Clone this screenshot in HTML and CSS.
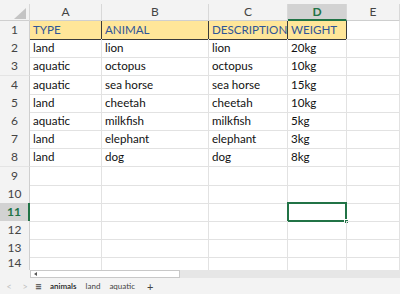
FILE: index.html
```html
<!DOCTYPE html>
<html lang="en">

<head>
    <meta charset="UTF-8">
    <title>animals</title>
    <link rel="stylesheet" href="styles.css">
</head>

<body>
    <div class="sheet">
        <div class="linha cabecalho">
            <div class="canto"><span class="triangulo"></span></div>
            <div class="col">A</div>
            <div class="col">B</div>
            <div class="col">C</div>
            <div class="col ativa">D</div>
            <div class="col">E</div>
        </div>

        <div class="linha titulo">
            <div class="num">1</div>
            <div class="cel">TYPE</div>
            <div class="cel">ANIMAL</div>
            <div class="cel">DESCRIPTION</div>
            <div class="cel">WEIGHT</div>
            <div class="cel vazia"></div>
        </div>
        <div class="linha">
            <div class="num">2</div>
            <div class="cel">land</div><div class="cel">lion</div><div class="cel">lion</div><div class="cel">20kg</div><div class="cel"></div>
        </div>
        <div class="linha">
            <div class="num">3</div>
            <div class="cel">aquatic</div><div class="cel">octopus</div><div class="cel">octopus</div><div class="cel">10kg</div><div class="cel"></div>
        </div>
        <div class="linha">
            <div class="num">4</div>
            <div class="cel">aquatic</div><div class="cel">sea horse</div><div class="cel">sea horse</div><div class="cel">15kg</div><div class="cel"></div>
        </div>
        <div class="linha">
            <div class="num">5</div>
            <div class="cel">land</div><div class="cel">cheetah</div><div class="cel">cheetah</div><div class="cel">10kg</div><div class="cel"></div>
        </div>
        <div class="linha">
            <div class="num">6</div>
            <div class="cel">aquatic</div><div class="cel">milkfish</div><div class="cel">milkfish</div><div class="cel">5kg</div><div class="cel"></div>
        </div>
        <div class="linha">
            <div class="num">7</div>
            <div class="cel">land</div><div class="cel">elephant</div><div class="cel">elephant</div><div class="cel">3kg</div><div class="cel"></div>
        </div>
        <div class="linha">
            <div class="num">8</div>
            <div class="cel">land</div><div class="cel">dog</div><div class="cel">dog</div><div class="cel">8kg</div><div class="cel"></div>
        </div>
        <div class="linha">
            <div class="num">9</div>
            <div class="cel"></div><div class="cel"></div><div class="cel"></div><div class="cel"></div><div class="cel"></div>
        </div>
        <div class="linha">
            <div class="num">10</div>
            <div class="cel"></div><div class="cel"></div><div class="cel"></div><div class="cel"></div><div class="cel"></div>
        </div>
        <div class="linha">
            <div class="num ativo">11</div>
            <div class="cel"></div><div class="cel"></div><div class="cel"></div><div class="cel selecionada"><span class="alca"></span></div><div class="cel"></div>
        </div>
        <div class="linha">
            <div class="num">12</div>
            <div class="cel"></div><div class="cel"></div><div class="cel"></div><div class="cel"></div><div class="cel"></div>
        </div>
        <div class="linha">
            <div class="num">13</div>
            <div class="cel"></div><div class="cel"></div><div class="cel"></div><div class="cel"></div><div class="cel"></div>
        </div>
        <div class="linha ultima">
            <div class="num">14</div>
            <div class="cel"></div><div class="cel"></div><div class="cel"></div><div class="cel"></div><div class="cel"></div>
        </div>
    </div>

    <div class="rolagem">
        <div class="espaco"></div>
        <div class="barra"><span class="seta"></span></div>
    </div>

    <div class="abas">
        <span class="nav">&lt;</span>
        <span class="nav">&gt;</span>
        <span class="menu">&#8801;</span>
        <span class="aba atual">animals</span>
        <span class="aba">land</span>
        <span class="aba">aquatic</span>
        <span class="mais">+</span>
    </div>
</body>

</html>
```

FILE: styles.css
```css
* {
    box-sizing: border-box;
}

body {
    margin: 0;
    width: 400px;
    height: 294px;
    overflow: hidden;
    background: #ffffff;
    font-family: Lato, "Open Sans", sans-serif;
    display: flex;
    flex-direction: column;
}

.sheet {
    height: 270px;
    overflow: hidden;
    flex-shrink: 0;
}

.linha {
    display: grid;
    grid-template-columns: 30px 72px 107px 79px 59px 1fr;
    height: 18.2px;
}

.linha.ultima {
    height: 12.4px;
}

.cabecalho {
    height: 21px;
    padding-top: 4px;
    background: #f3f3f3;
    border-bottom: 1px solid #cfcfcf;
}

.canto {
    position: relative;
    border-right: 1px solid #d8d8d8;
}

.triangulo {
    position: absolute;
    right: 3px;
    bottom: 2px;
    width: 0;
    height: 0;
    border-left: 12px solid transparent;
    border-bottom: 11px solid #c4c4c4;
}

.col {
    text-align: center;
    font-size: 12px;
    line-height: 16px;
    color: #444444;
    border-right: 1px solid #d8d8d8;
}

.col.ativa {
    background: #d2d2d2;
    color: #217346;
    font-weight: bold;
    border-bottom: 2px solid #217346;
    line-height: 15px;
}

.num {
    background: #f3f3f3;
    text-align: center;
    font-size: 12px;
    line-height: 18px;
    color: #444444;
    border-right: 1px solid #cfcfcf;
    border-bottom: 1px solid #e4e4e4;
}

.ultima .num {
    line-height: 12px;
    border-bottom: none;
}

.ultima .cel {
    border-bottom: none;
}

.num.ativo {
    background: #d2d2d2;
    color: #217346;
    font-weight: bold;
    border-right: 2px solid #217346;
}

.cel {
    font-size: 11.6px;
    line-height: 17px;
    padding-left: 3px;
    color: #111111;
    white-space: nowrap;
    border-right: 1px solid #e2e2e2;
    border-bottom: 1px solid #e2e2e2;
    position: relative;
}

.titulo .cel {
    background: #ffe699;
    color: #2f5597;
    border-right: 1px solid #3a3a3a;
    border-bottom: 1px solid #3a3a3a;
}

.titulo .cel.vazia {
    background: #ffffff;
    border-right: 1px solid #e2e2e2;
    border-bottom: 1px solid #e2e2e2;
}

.selecionada {
    border: 2px solid #217346;
    margin-top: -1px;
    margin-left: -1px;
}

.alca {
    position: absolute;
    right: -4px;
    bottom: -4px;
    width: 5px;
    height: 5px;
    background: #217346;
    border: 1px solid #ffffff;
}

.rolagem {
    display: flex;
    height: 8px;
    background: #e6e6e6;
    flex-shrink: 0;
}

.espaco {
    width: 30px;
    background: #f3f3f3;
}

.barra {
    width: 150px;
    background: #ffffff;
    border: 1px solid #c8c8c8;
    position: relative;
}

.seta {
    position: absolute;
    left: 3px;
    top: 1px;
    width: 0;
    height: 0;
    border-top: 2px solid transparent;
    border-bottom: 2px solid transparent;
    border-right: 3px solid #555555;
}

.abas {
    flex: 1;
    background: #f3f3f3;
    display: flex;
    align-items: center;
    font-size: 8px;
    color: #444444;
    padding-left: 1px;
}

.nav {
    color: #c0c0c0;
    font-size: 9px;
    width: 16px;
    text-align: center;
}

.menu {
    font-size: 12px;
    margin-left: 2px;
    margin-right: 8px;
    color: #444444;
}

.aba {
    margin-right: 9px;
}

.aba.atual {
    color: #222222;
    font-weight: 600;
}

.mais {
    font-size: 11px;
    margin-left: 3px;
}
```
